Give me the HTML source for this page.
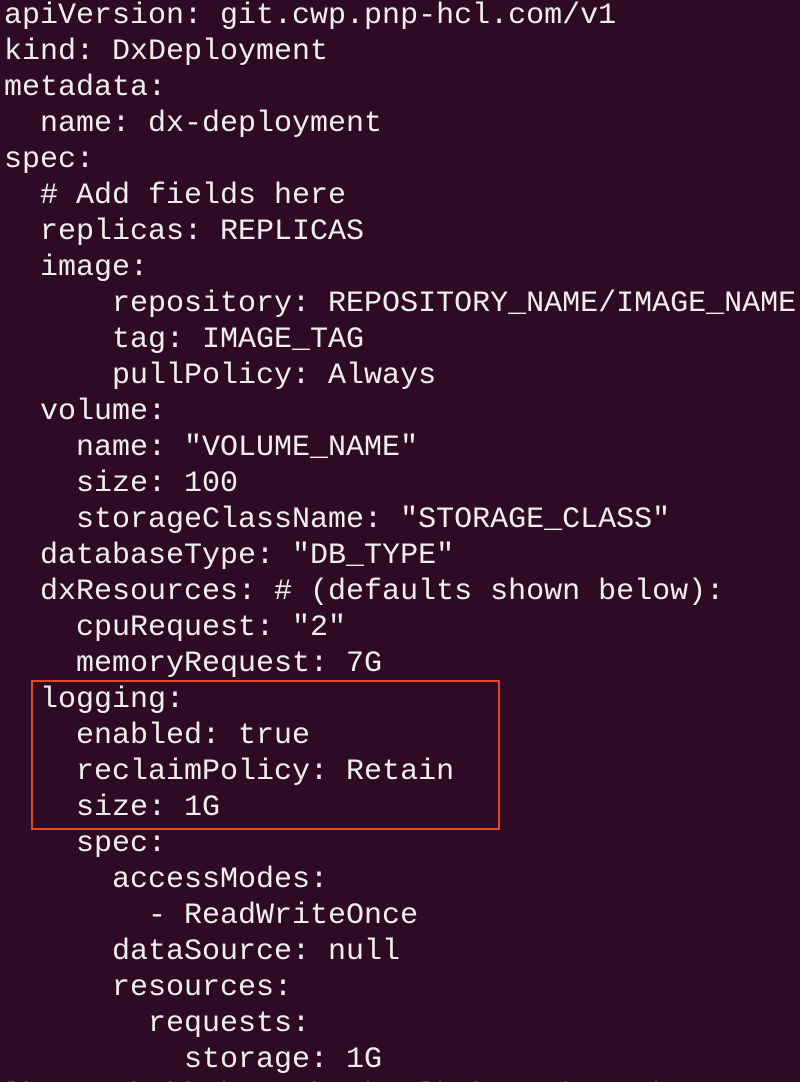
<!DOCTYPE html>
<html><head><meta charset="utf-8"><style>
html,body{margin:0;padding:0;background:#2f0a24;width:800px;height:1082px;overflow:hidden;position:relative}
pre{margin:0;position:absolute;left:4px;top:-2px;font-family:"Liberation Mono","DejaVu Sans Mono",monospace;font-size:30px;line-height:36px;color:#efeeee;letter-spacing:0}
.box{position:absolute;left:31px;top:680px;width:465px;height:146px;border:2px solid #e0472c}
.g{color:#6f9a40}
</style></head><body>
<pre>apiVersion: git.cwp.pnp-hcl.com/v1
kind: DxDeployment
metadata:
  name: dx-deployment
spec:
  # Add fields here
  replicas: REPLICAS
  image:
      repository: REPOSITORY_NAME/IMAGE_NAME
      tag: IMAGE_TAG
      pullPolicy: Always
  volume:
    name: "VOLUME_NAME"
    size: 100
    storageClassName: "STORAGE_CLASS"
  databaseType: "DB_TYPE"
  dxResources: # (defaults shown below):
    cpuRequest: "2"
    memoryRequest: 7G
  logging:
    enabled: true
    reclaimPolicy: Retain
    size: 1G
    spec:
      accessModes:
        - ReadWriteOnce
      dataSource: null
      resources:
        requests:
          storage: 1G
<span class="g">lh     b bh h    b  b  lh h    h    b</span></pre>
<div class="box"></div>
</body></html>
